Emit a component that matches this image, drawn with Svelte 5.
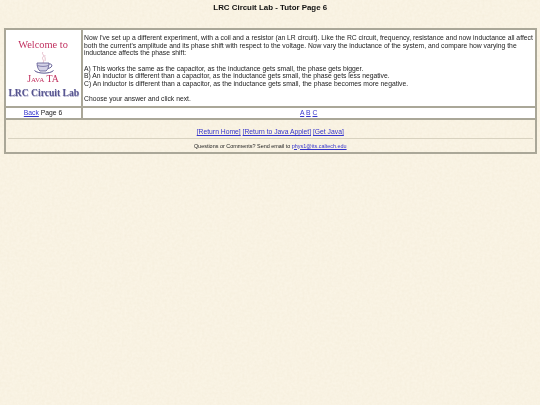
<script>
  const choices = [
    'A) This works the same as the capacitor, as the inductance gets small, the phase gets bigger.',
    'B) An inductor is different than a capacitor, as the inductance gets small, the phase gets less negative.',
    'C) An inductor is different than a capacitor, as the inductance gets small, the phase becomes more negative.'
  ];
</script>

<div class="page">
  <h1>LRC Circuit Lab - Tutor Page 6</h1>

  <table class="frame">
    <tbody>
      <tr>
        <td class="logo">
          <div class="welcome">Welcome to</div>
          <svg class="cup" viewBox="0 0 20 22" aria-hidden="true">
            <path d="M9 0c-2 2 2 3 0 5s2 3 0 6M11 3c-1 2 1 3 0 6" fill="none" stroke="#dba6b8" stroke-width="0.7" />
            <path d="M3 11h12c0 4-1.500 7-3 8H6c-1.500-1-3-4-3-8z" fill="#d4d2e6" stroke="#5a558f" stroke-width="0.8" />
            <path d="M3.500 13.500c3 1.200 8 1.200 11 0" fill="none" stroke="#5a558f" stroke-width="0.7" />
            <path d="M15 12c4-.5 4 3.500-1 4.500" fill="none" stroke="#5a558f" stroke-width="0.9" />
            <path d="M0.500 18.500c3 3.500 16 3.500 19 0" fill="none" stroke="#5a558f" stroke-width="1" />
          </svg>
          <div class="java">Java TA</div>
          <div class="lab">LRC Circuit Lab</div>
        </td>
        <td class="text">
          <p>Now I've set up a different experiment, with a coil and a resistor (an LR circuit). Like the RC circuit, frequency, resistance and now inductance all affect both the current's amplitude and its phase shift with respect to the voltage. Now vary the inductance of the system, and compare how varying the inductance affects the phase shift:</p>
          <p>
            {#each choices as choice}
              {choice}<br />
            {/each}
          </p>
          <p>Choose your answer and click next.</p>
        </td>
      </tr>
      <tr>
        <td class="nav"><a href="#back">Back</a> Page 6</td>
        <td class="nav"><a href="#a">A</a> <a href="#b">B</a> <a href="#c">C</a></td>
      </tr>
      <tr>
        <td class="footer" colspan="2">
          <div class="links">
            <a href="#home">[Return Home]</a>
            <a href="#applet">[Return to Java Applet]</a>
            <a href="#java">[Get Java]</a>
          </div>
          <hr />
          <div class="contact">Questions or Comments? Send email to <a href="#mail">phys1@its.caltech.edu</a></div>
        </td>
      </tr>
    </tbody>
  </table>
</div>

<style>
  :global(body) {
    margin: 0;
    background-color: #faf4e5;
    background-image: url("data:image/svg+xml,%3Csvg xmlns='http://www.w3.org/2000/svg' width='540' height='405'%3E%3Cfilter id='n'%3E%3CfeTurbulence type='fractalNoise' baseFrequency='0.4' numOctaves='2' seed='4'/%3E%3CfeColorMatrix values='0 0 0 0 0.72 0 0 0 0 0.62 0 0 0 0 0.42 0 0 0 0.2 -0.05'/%3E%3C/filter%3E%3Crect width='540' height='405' filter='url(%23n)'/%3E%3C/svg%3E");
  }

  .page {
    width: 540px;
    height: 405px;
    padding: 3px 3px 0 3.5px;
    box-sizing: border-box;
    font-family: "Liberation Sans", Arial, sans-serif;
    font-size: 6.77px;
    line-height: 7.65px;
    color: #222;
    filter: blur(0.3px);
  }

  h1 {
    margin: 0 0 15px;
    height: 10px;
    font-size: 7.9px;
    line-height: 10px;
    text-align: center;
    color: #111;
  }

  a {
    color: #3434cc;
  }

  .frame {
    width: 533.5px;
    border-collapse: collapse;
    table-layout: fixed;
    border: 2px solid #aaa798;
  }

  td {
    border: 2px solid #aaa798;
    padding: 0;
  }

  .logo {
    width: 75px;
    height: 76px;
    background: #fff;
    text-align: center;
    vertical-align: top;
    font-family: "Liberation Serif", serif;
  }

  .welcome {
    margin-top: 9px;
    font-size: 10.4px;
    line-height: 12px;
    color: #c0305f;
  }

  .cup {
    display: block;
    margin: 1px 0 0 28px;
    width: 20px;
    height: 22px;
  }

  .java {
    font-size: 9.8px;
    line-height: 10px;
    color: #c0305f;
    font-variant: small-caps;
  }

  .lab {
    margin-top: 4px;
    padding-left: 1.5px;
    font-size: 9.6px;
    line-height: 10px;
    font-weight: bold;
    color: #55538f;
    white-space: nowrap;
    text-shadow: 0.5px 0.5px 0.5px #b9b8d2;
  }

  .text {
    background: #fff;
    padding: 4px 0 0 1.5px;
    vertical-align: top;
  }

  p {
    margin: 0 0 7.65px;
  }

  p:last-child {
    margin-bottom: 0;
  }

  .nav {
    height: 10px;
    background: #fff;
    text-align: center;
  }

  .footer {
    height: 23.5px;
    text-align: center;
    padding: 8px 2px 0;
    vertical-align: top;
  }

  .links {
    height: 8px;
  }

  hr {
    margin: 2px 0 3.5px;
    border: 0;
    border-top: 1px solid #d8d2c0;
  }

  .contact {
    font-size: 5.45px;
    line-height: 7px;
  }
</style>
